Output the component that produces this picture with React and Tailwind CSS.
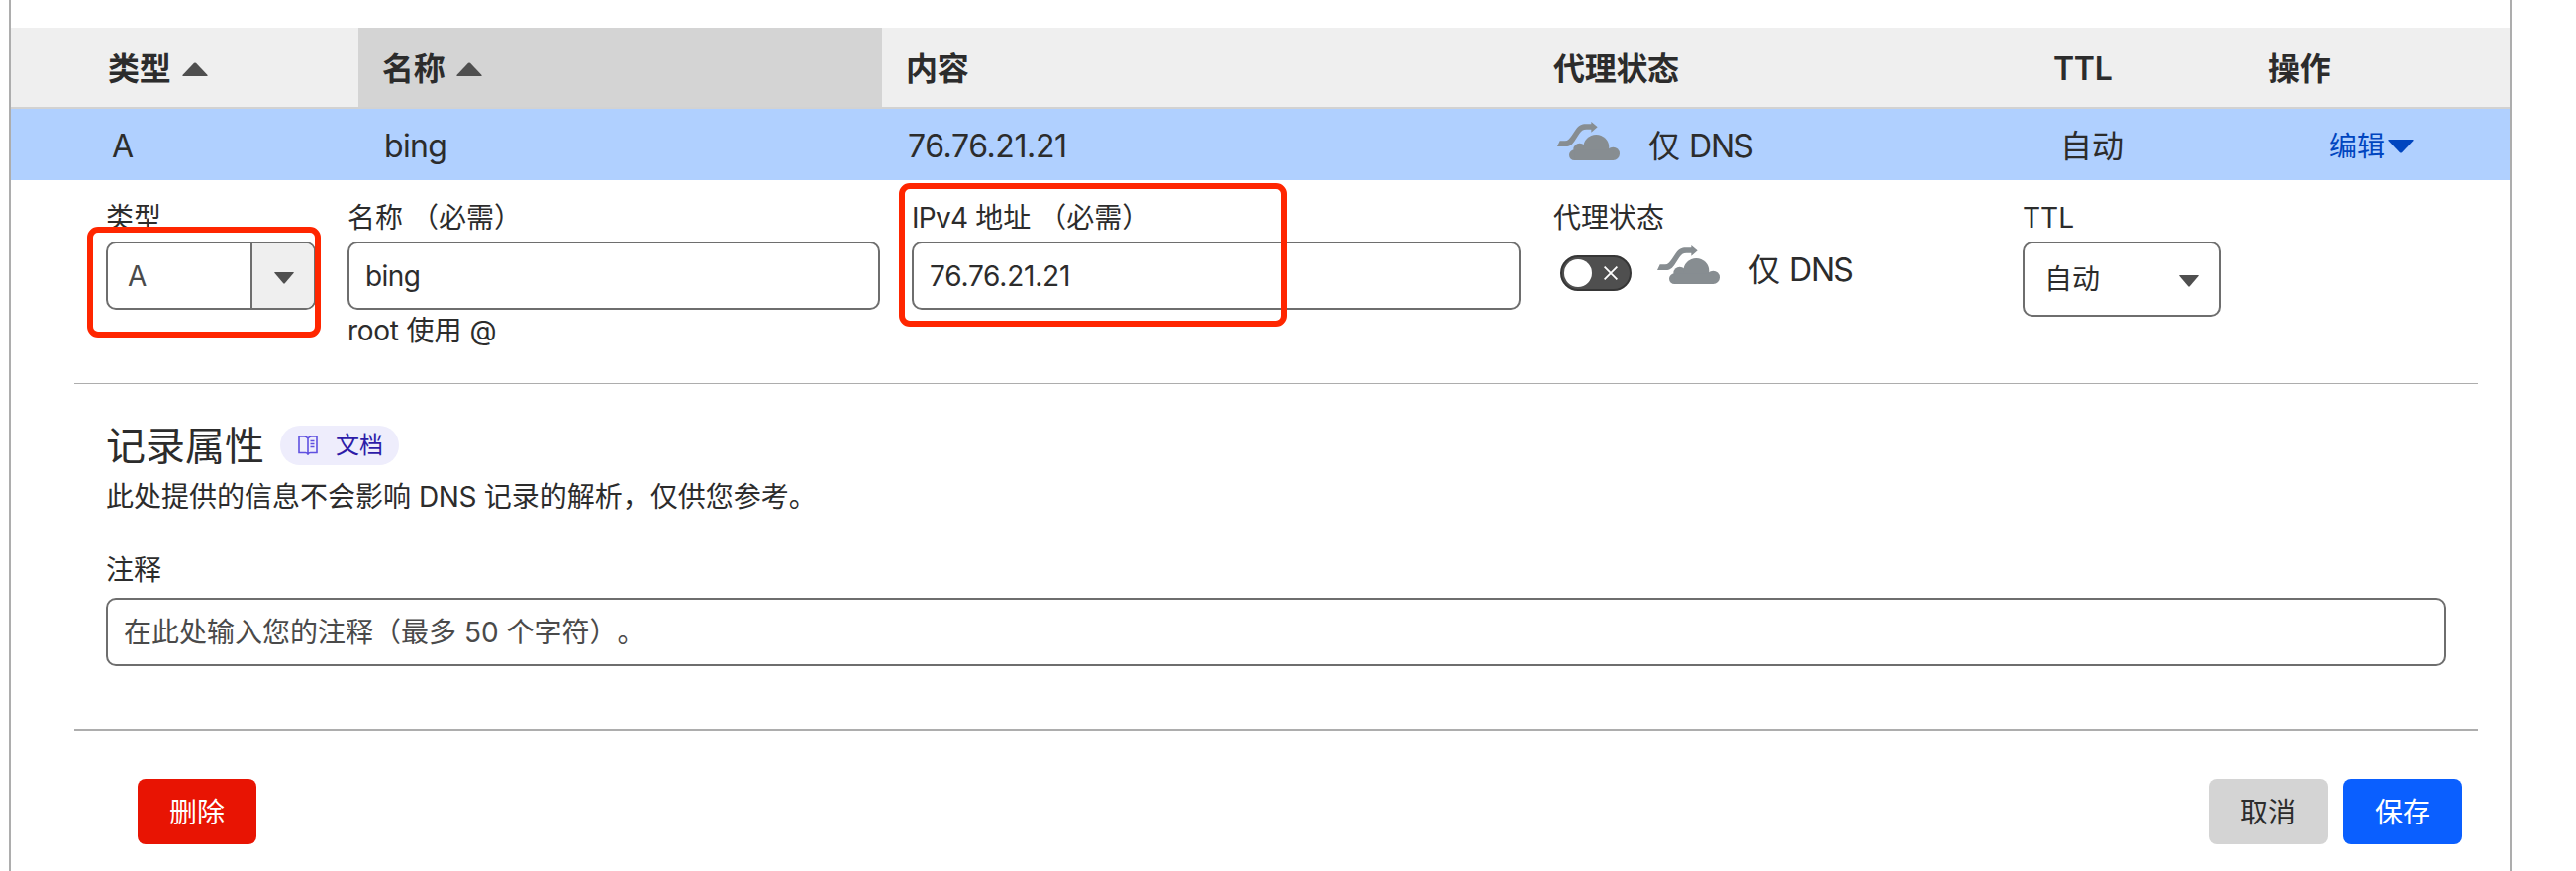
const columns = [
  { label: '类型', sortable: true, className: 'w-[351px] pl-[98px]' },
  { label: '名称', sortable: true, className: 'w-[529px] pl-6 bg-[#d4d4d4]' },
  { label: '内容', className: 'w-[654px] pl-6' },
  { label: '代理状态', className: 'w-[505px] pl-6' },
  { label: 'TTL', className: 'w-[217px] pl-6' },
  { label: '操作', className: 'flex-1 pl-6' },
];

function CloudIcon({ className }) {
  return (
    <svg width="63" height="39" viewBox="0 0 189 117" fill="#878d91" className={className}>
      <path d="M0 75 L8 58 H24 C32 58 38 51 44 42 L56 24 C65 11 74 7 86 7 H103 V0 L122 16 L103 32 V23 H88 C78 23 73 27 67 36 L54 56 C46 69 38 75 26 75 Z" />
      <circle cx="52" cy="101" r="16" />
      <circle cx="68" cy="84" r="19" />
      <circle cx="118" cy="78" r="39" />
      <circle cx="169" cy="97" r="20" />
      <rect x="52" y="85" width="117" height="32" />
    </svg>
  );
}

function BookIcon() {
  return (
    <svg width="20" height="20" viewBox="0 0 20 20" fill="none" stroke="#5f50e0" strokeWidth="1.6">
      <path d="M10 3 C9 1.6 8 1 6.5 1 H1 V17.5 H7.5 C8.8 17.5 9.4 18 10 19 C10.6 18 11.2 17.5 12.5 17.5 H19 V1 H13.5 C12 1 11 1.6 10 3 V18" />
      <path d="M12.5 5.5 H16.5 M12.5 8.5 H16.5 M12.5 11.5 H16.5" />
    </svg>
  );
}

function Triangle({ up, small, className }) {
  return (
    <svg
      width={small ? 20 : 26}
      height={small ? 12 : 14}
      viewBox="0 0 26 14"
      preserveAspectRatio="none"
      fill="currentColor"
      className={className}
    >
      <path d={up ? 'M12 0.8 Q13 0 14 0.8 L25.6 13 Q26 14 25 14 H1 Q0 14 0.4 13 Z' : 'M12 13.2 Q13 14 14 13.2 L25.6 1 Q26 0 25 0 H1 Q0 0 0.4 1 Z'} />
    </svg>
  );
}

function ProxyStatus() {
  return (
    <div className="flex items-center text-[32px] leading-9">
      <CloudIcon className="shrink-0 mb-[11px]" />
      <span className="ml-[29px]">
        仅 <span className="tracking-[-1px]">DNS</span>
      </span>
    </div>
  );
}

function Field({ label, className, children }) {
  return (
    <div className={className}>
      <div className="h-[42px] mb-1 leading-[44px] whitespace-pre">{label}</div>
      {children}
    </div>
  );
}

export default function App() {
  return (
    <div className="h-[880px] overflow-hidden bg-white pl-[9px] text-[28px] text-[#2c2c2c] font-['Inter','Noto_Sans_CJK_SC',sans-serif] [text-spacing-trim:space-all]">
      <div className="w-[2528px] h-full border-x-2 border-[#adadad] pt-7">
        <div className="flex h-[82px] border-b-2 border-[#d2d2d2] bg-[#efefef] text-[32px] font-semibold">
          {columns.map((column) => (
            <div key={column.label} className={`flex items-center pt-[3px] ${column.className}`}>
              <span className="tracking-[-0.3px]">{column.label}</span>
              {column.sortable && <Triangle up className="ml-3 text-[#4f4f4f]" />}
            </div>
          ))}
        </div>

        <div className="flex items-center h-[72px] pt-[3px] bg-[#b0d0ff] text-[32px]">
          <div className="w-[351px] pl-[102px]">A</div>
          <div className="w-[529px] pl-[26px] tracking-[-0.7px]">bing</div>
          <div className="w-[654px] pl-[26px] tracking-[-0.4px]">76.76.21.21</div>
          <div className="w-[505px] pl-7">
            <ProxyStatus />
          </div>
          <div className="w-[217px] pl-[31px]">自动</div>
          <div className="flex-1 pl-[86px] flex items-center text-[28px] text-[#0045bf]">
            编辑
            <Triangle className="ml-[3px]" />
          </div>
        </div>

        <div className="flex h-[205px] pt-4 pl-24">
          <Field label="类型" className="w-[244px] relative">
            <div className="flex w-[212px] h-[69px] rounded-[10px] border-2 border-[#6e6e6e] overflow-hidden">
              <div className="flex-1 flex items-center pl-5 text-[#4a4a4a]">A</div>
              <div className="w-[64px] flex items-center justify-center border-l-2 border-[#6e6e6e] bg-[#efefef] pl-0.5 text-[#4f4f4f]">
                <Triangle small className="mt-1" />
              </div>
            </div>
            <div className="absolute left-[-19px] top-[31px] w-[236px] h-[112px] rounded-[11px] border-6 border-[#ff2600]" />
          </Field>

          <Field label="名称 （必需）" className="w-[570px]">
            <div className="w-[538px] h-[69px] flex items-center rounded-[10px] border-2 border-[#6e6e6e] pl-4 tracking-[-0.6px]">bing</div>
            <div className="leading-[43px]">
              <span className="tracking-[-0.3px]">root</span> 使用 @
            </div>
          </Field>

          <Field
            label={<><span className="tracking-[-0.7px]">IPv4</span> 地址 （必需）</>}
            className="w-[648px] relative"
          >
            <div className="w-[615px] h-[69px] flex items-center rounded-[10px] border-2 border-[#6e6e6e] pl-4 tracking-[-0.2px]">76.76.21.21</div>
            <div className="absolute left-[-13px] top-[-13px] w-[392px] h-[145px] rounded-[11px] border-6 border-[#ff2600]" />
          </Field>

          <Field label="代理状态" className="w-[474px]">
            <div className="flex items-center pl-[7px] h-[64px]">
              <div className="w-[72px] h-9 flex items-center rounded-full border-2 border-[#363636] bg-[#4f4f4f] pl-0.5">
                <div className="w-7 h-7 rounded-full bg-white" />
                <svg width="14" height="14" viewBox="0 0 14 14" stroke="#fff" strokeWidth="1.8" className="ml-3">
                  <path d="M0.6 0.6 L13.4 13.4 M13.4 0.6 L0.6 13.4" />
                </svg>
              </div>
              <div className="ml-[26px] mb-1.5">
                <ProxyStatus />
              </div>
            </div>
          </Field>

          <Field label="TTL">
            <div className="w-[200px] h-[76px] flex items-center justify-between rounded-[10px] border-2 border-[#6e6e6e] px-5">
              自动
              <Triangle small className="mt-1 text-[#4f4f4f]" />
            </div>
          </Field>
        </div>

        <div className="ml-16 w-[2428px] h-[352px] pl-8 pt-[42px] border-t border-b-2 border-[#adadad] flex flex-col">
          <div className="flex items-center h-10">
            <h2 className="text-[40px] leading-10 mt-0.5">记录属性</h2>
            <span className="flex items-center ml-4 h-10 w-[120px] rounded-full bg-[#eeedfc] pl-[18px] text-2xl text-[#2d1ca8]">
              <BookIcon />
              <span className="ml-[18px]">文档</span>
            </span>
          </div>
          <p className="mt-[11px] leading-[42px]">
            此处提供的信息不会影响 <span className="tracking-[-0.4px]">DNS</span> 记录的解析，仅供您参考。
          </p>
          <label className="mt-8 leading-[42px]">注释</label>
          <div className="mt-[7px] w-[2364px] h-[69px] flex items-center rounded-[10px] border-2 border-[#6e6e6e] pt-px pl-4 text-[#4a4a4a]">
            在此处输入您的注释（最多 50 个字符）。
          </div>
        </div>

        <div className="flex items-center mt-12 pl-32 pr-12">
          <button className="w-[120px] h-[66px] rounded-lg bg-[#e81403] pt-px text-white">删除</button>
          <button className="w-[120px] h-[66px] rounded-lg bg-[#d4d4d4] pt-px ml-auto">取消</button>
          <button className="w-[120px] h-[66px] rounded-lg bg-[#0a5fff] pt-px text-white ml-4">保存</button>
        </div>
      </div>
    </div>
  );
}
